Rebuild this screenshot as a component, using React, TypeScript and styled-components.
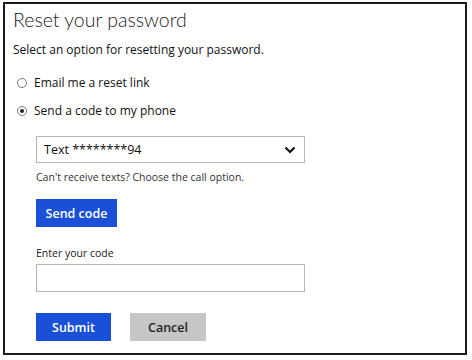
import React from "react";
import styled, { createGlobalStyle } from "styled-components";

const Global = createGlobalStyle`
  html, body { margin: 0; padding: 0; background: #fff; }
  body { font-family: "Open Sans", "Noto Sans", sans-serif; color: #222; }
  * { box-sizing: border-box; }
`;

const Frame = styled.div`
  margin: 2px 0 0 3px;
  width: 464px;
  height: 353px;
  border: 2px solid #1a1a1a;
  padding: 3px 0 0 8px;
  display: flex;
  flex-direction: column;
`;

const Title = styled.h1`
  margin: 0;
  font-family: "Lato", "Open Sans", sans-serif;
  font-weight: 300;
  font-size: 19.5px;
  line-height: 26px;
  color: #222;
`;

const Subtitle = styled.p`
  margin: 9px 0 0 0;
  font-size: 12px;
  line-height: 16px;
  color: #111;
`;

const RadioRow = styled.label<{ $top: number }>`
  display: flex;
  align-items: center;
  gap: 7px;
  margin-top: ${(p) => p.$top}px;
  padding-left: 4px;
  font-size: 12px;
  line-height: 16px;
  color: #111;
`;

const RadioCircle = styled.span<{ $checked?: boolean }>`
  width: 10px;
  height: 10px;
  border-radius: 50%;
  border: 1px solid #777;
  display: flex;
  align-items: center;
  justify-content: center;
  &::after {
    content: "";
    width: 4px;
    height: 4px;
    border-radius: 50%;
    background: ${(p) => (p.$checked ? "#222" : "transparent")};
  }
`;

const Indented = styled.div`
  padding-left: 23px;
  display: flex;
  flex-direction: column;
  align-items: flex-start;
`;

const Select = styled.div`
  margin-top: 17px;
  width: 269px;
  height: 27px;
  border: 1px solid #b5b5b5;
  display: flex;
  align-items: center;
  justify-content: space-between;
  padding: 0 8px 0 7px;
  font-size: 12.5px;
  color: #111;
`;

const Hint = styled.div`
  margin-top: 7px;
  font-size: 10.5px;
  line-height: 14px;
  color: #333;
`;

const Button = styled.button<{ $variant?: "primary" | "secondary" }>`
  height: 28px;
  padding: 0;
  width: ${(p) => (p.$variant === "secondary" ? 76 : 75)}px;
  border: none;
  font-family: "Open Sans", sans-serif;
  font-weight: 600;
  font-size: 12.5px;
  background: ${(p) => (p.$variant === "secondary" ? "#c6c6c6" : "#1a4fd8")};
  color: ${(p) => (p.$variant === "secondary" ? "#222" : "#fff")};
`;

const SendButton = styled(Button)`
  margin-top: 15px;
  width: 81px;
`;

const Label = styled.div`
  margin-top: 19px;
  font-size: 10.5px;
  line-height: 14px;
  color: #222;
`;

const Input = styled.div`
  margin-top: 4px;
  width: 269px;
  height: 28px;
  border: 1px solid #b5b5b5;
`;

const Actions = styled.div`
  margin-top: 21px;
  display: flex;
  gap: 19px;
`;

const Chevron = () => (
  <svg width="12" height="8" viewBox="0 0 12 8">
    <polyline points="1.5,1.5 6,6 10.5,1.5" fill="none" stroke="#111" strokeWidth="2.2" />
  </svg>
);

export default function App() {
  return (
    <>
      <Global />
      <Frame>
        <Title>Reset your password</Title>
        <Subtitle>Select an option for resetting your password.</Subtitle>
        <RadioRow $top={17}>
          <RadioCircle />
          Email me a reset link
        </RadioRow>
        <RadioRow $top={12}>
          <RadioCircle $checked />
          Send a code to my phone
        </RadioRow>
        <Indented>
          <Select>
            <span>Text ********94</span>
            <Chevron />
          </Select>
          <Hint>Can't receive texts? Choose the call option.</Hint>
          <SendButton>Send code</SendButton>
          <Label>Enter your code</Label>
          <Input />
          <Actions>
            <Button>Submit</Button>
            <Button $variant="secondary">Cancel</Button>
          </Actions>
        </Indented>
      </Frame>
    </>
  );
}
